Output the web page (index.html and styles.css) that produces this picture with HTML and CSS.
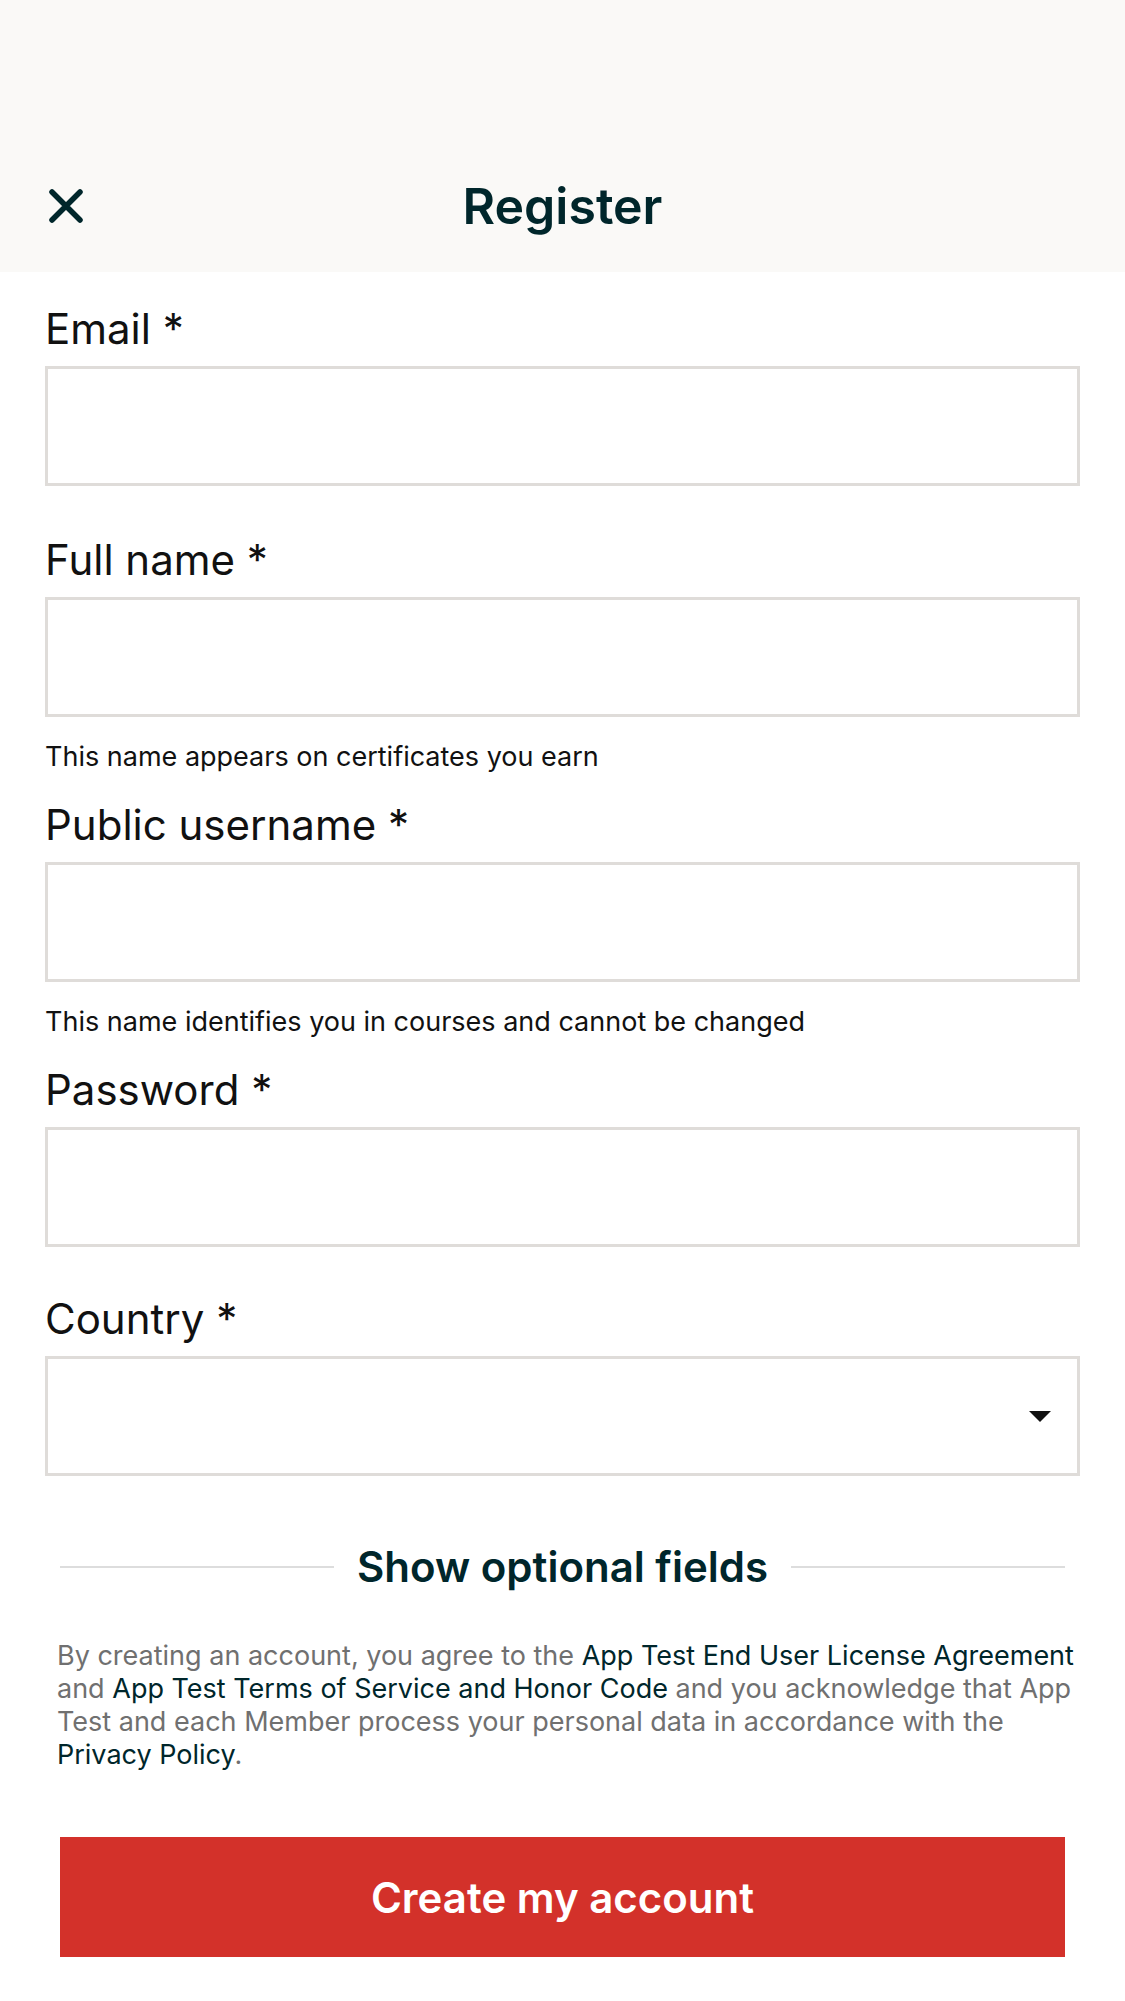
FILE: index.html
```html
<!DOCTYPE html>
<html lang="en">
<head>
<meta charset="utf-8">
<title>Register</title>
<link rel="stylesheet" href="styles.css">
</head>
<body>
<header class="topbar">
  <button class="close" aria-label="Close">
    <svg viewBox="0 0 36 36" width="36" height="36"><path d="M4 4 L32 32 M32 4 L4 32" stroke="#00262b" stroke-width="5.5" stroke-linecap="round" fill="none"/></svg>
  </button>
  <h1 class="title">Register</h1>
</header>
<main class="form">
  <div class="field field-plain">
    <label class="label">Email *</label>
    <div class="input"></div>
  </div>
  <div class="field field-help">
    <label class="label">Full name *</label>
    <div class="input"></div>
    <p class="help">This name appears on certificates you earn</p>
  </div>
  <div class="field field-help">
    <label class="label">Public username *</label>
    <div class="input"></div>
    <p class="help">This name identifies you in courses and cannot be changed</p>
  </div>
  <div class="field field-plain field-last">
    <label class="label">Password *</label>
    <div class="input"></div>
  </div>
  <div class="field">
    <label class="label">Country *</label>
    <div class="input select"><span class="caret"></span></div>
  </div>
  <section class="bottom">
    <div class="optional">
      <span class="rule"></span>
      <span class="optional-text">Show optional fields</span>
      <span class="rule"></span>
    </div>
    <p class="legal">By creating an account, you agree to the <a>App Test End User License Agreement</a> and <a>App Test Terms of Service and Honor Code</a> and you acknowledge that App Test and each Member process your personal data in accordance with the <a>Privacy Policy</a>.</p>
    <button class="submit">Create my account</button>
  </section>
</main>
</body>
</html>
```
FILE: styles.css
```css
* { box-sizing: border-box; }
html, body { margin: 0; padding: 0; background: #ffffff; }
body { font-family: Inter, "Noto Sans", "Liberation Sans", sans-serif; color: #111111; }

.topbar {
  height: 272px;
  background: #faf9f7;
  display: flex;
  align-items: center;
  position: relative;
  padding: 140px 0 0 0;
}
.close {
  position: absolute;
  left: 48px;
  top: 188px;
  width: 36px;
  height: 36px;
  padding: 0;
  border: 0;
  background: transparent;
  display: flex;
}
.title {
  flex: 1;
  margin: 0;
  text-align: center;
  font-size: 50px;
  line-height: 60px;
  font-weight: 600;
  color: #00262b;
}

.form { padding: 33px 45px 0 45px; }
.field { display: flex; flex-direction: column; }
.field-plain { margin-bottom: 50px; }
.field-last { margin-bottom: 48px; }
.field-help { margin-bottom: 27px; }
.label {
  font-size: 42px;
  line-height: 48px;
  font-weight: 400;
  color: #111111;
  margin-bottom: 13px;
}
.input {
  height: 120px;
  border: 3px solid #dfdcd9;
  background: #ffffff;
}
.help {
  margin: 23px 0 0 0;
  font-size: 27px;
  line-height: 34px;
  color: #111111;
}
.select { display: flex; align-items: center; justify-content: flex-end; padding-right: 26px; }
.caret {
  width: 0; height: 0;
  border-left: 11.5px solid transparent;
  border-right: 11.5px solid transparent;
  border-top: 11px solid #111111;
}

.bottom { padding: 67px 15px 0 15px; }
.optional { display: flex; align-items: center; gap: 23px; }
.rule { flex: 1; height: 2px; background: #dddddd; }
.optional-text {
  font-size: 42px;
  line-height: 48px;
  font-weight: 600;
  color: #00262b;
}
.legal {
  margin: 48px -14px 0 -3px;
  font-size: 27px;
  line-height: 33px;
  color: #707070;
}
.legal a { color: #00262b; }
.submit {
  display: block;
  width: 100%;
  height: 120px;
  margin-top: 66px;
  border: 0;
  background: #d3312a;
  color: #ffffff;
  font-family: Inter, "Noto Sans", "Liberation Sans", sans-serif;
  font-size: 42px;
  font-weight: 600;
}
```
